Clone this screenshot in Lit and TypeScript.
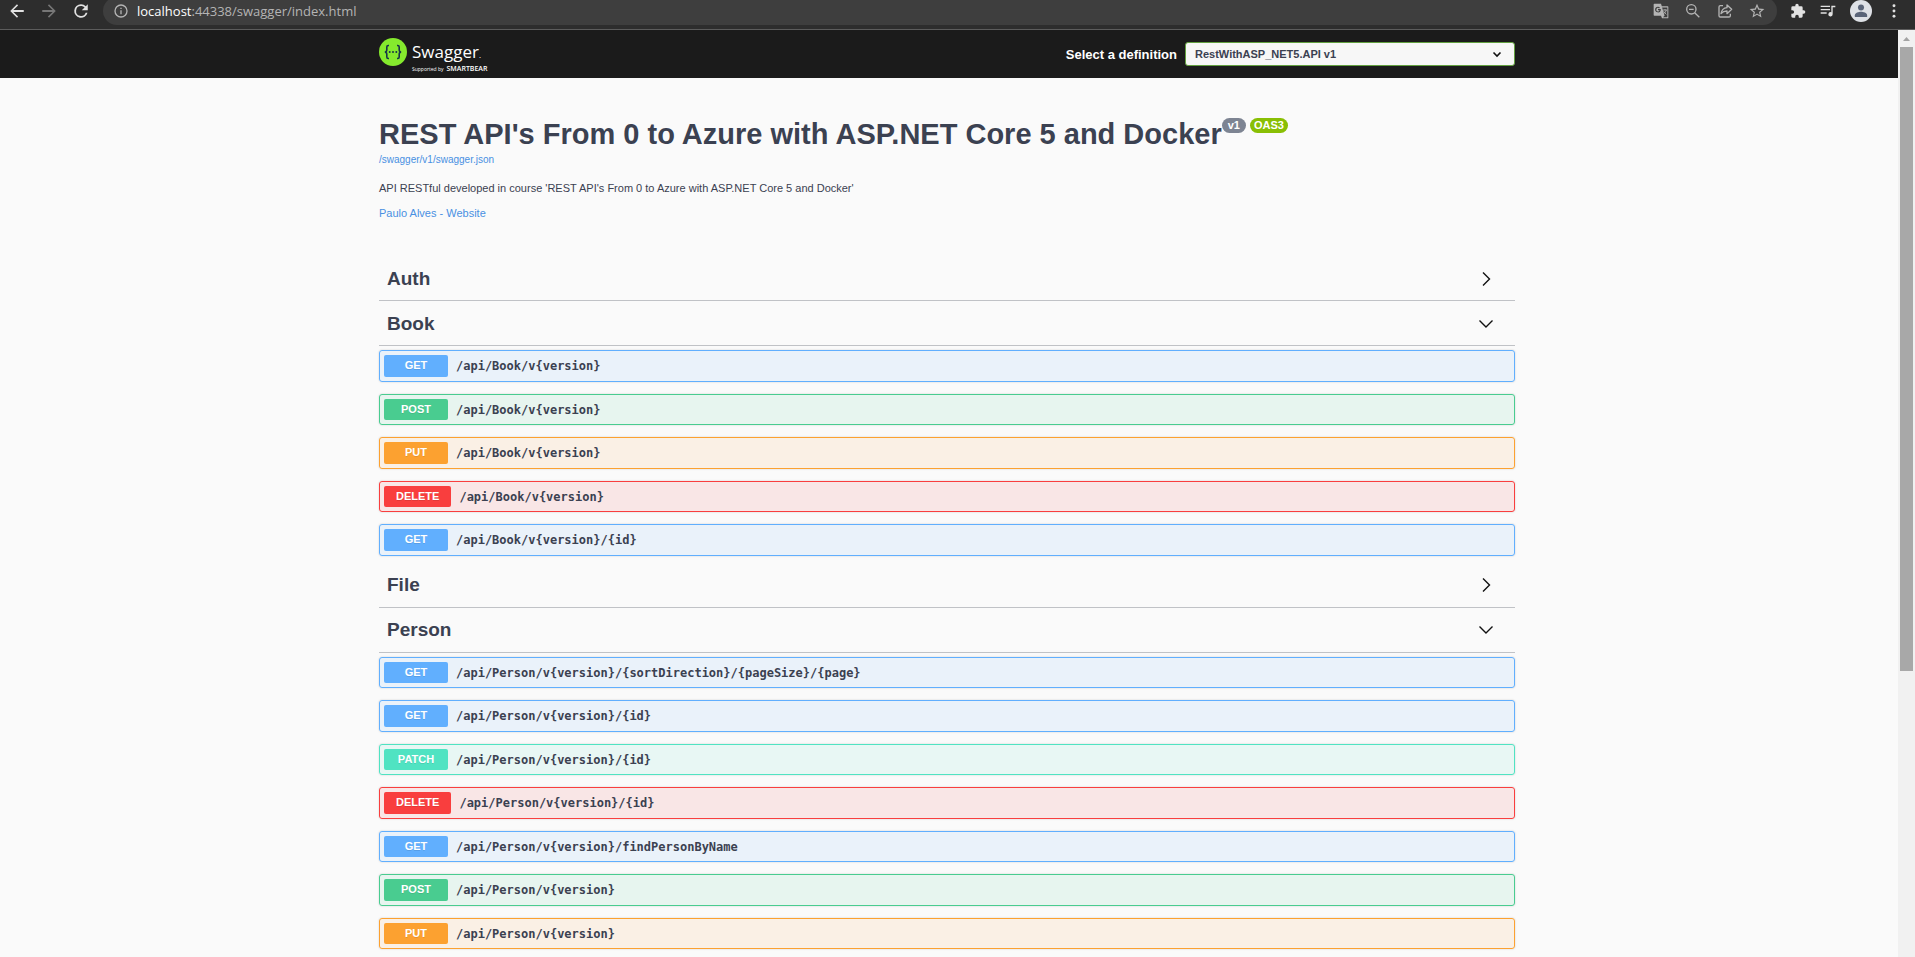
import { LitElement, html, css, svg } from "lit";
import { customElement, property, state } from "lit/decorators.js";

type Method = "get" | "post" | "put" | "delete" | "patch";

interface Operation {
  method: Method;
  path: string;
}

interface Tag {
  name: string;
  open: boolean;
  operations: Operation[];
}

const TAGS: Tag[] = [
  { name: "Auth", open: false, operations: [] },
  {
    name: "Book",
    open: true,
    operations: [
      { method: "get", path: "/api/Book/v{version}" },
      { method: "post", path: "/api/Book/v{version}" },
      { method: "put", path: "/api/Book/v{version}" },
      { method: "delete", path: "/api/Book/v{version}" },
      { method: "get", path: "/api/Book/v{version}/{id}" },
    ],
  },
  { name: "File", open: false, operations: [] },
  {
    name: "Person",
    open: true,
    operations: [
      { method: "get", path: "/api/Person/v{version}/{sortDirection}/{pageSize}/{page}" },
      { method: "get", path: "/api/Person/v{version}/{id}" },
      { method: "patch", path: "/api/Person/v{version}/{id}" },
      { method: "delete", path: "/api/Person/v{version}/{id}" },
      { method: "get", path: "/api/Person/v{version}/findPersonByName" },
      { method: "post", path: "/api/Person/v{version}" },
      { method: "put", path: "/api/Person/v{version}" },
    ],
  },
];

const ICONS = {
  back: svg`<path d="M21 10.800H7.200l6.200-6.200L12 3l-9 9 9 9 1.400-1.600-6.200-6.200H21z"/>`,
  forward: svg`<path d="M12 3l-1.400 1.600 6.200 6.200H3v2.400h13.800l-6.200 6.200L12 21l9-9z"/>`,
  reload: svg`<path d="M18.400 5.600A9 9 0 0 0 12 3a9 9 0 1 0 8.700 11.300h-2.500A6.600 6.600 0 1 1 12 5.400c1.800 0 3.500.8 4.700 1.900L13 11h8V3z"/>`,
  info: svg`<path d="M11 7h2v2h-2zm0 4h2v6h-2zm1-9a10 10 0 1 0 0 20 10 10 0 0 0 0-20zm0 18a8 8 0 1 1 0-16 8 8 0 0 1 0 16z"/>`,
  translate: svg`<path fill-rule="evenodd" d="M2 1h10l1.200 4H22a1 1 0 0 1 1 1v16a1 1 0 0 1-1 1h-8.500L12 19H2a1 1 0 0 1-1-1V2a1 1 0 0 1 1-1zM7.500 5.500a4.300 4.300 0 1 0 4.200 5.200V9H7.500v1.800h2.300a2.500 2.500 0 1 1-.7-2.700l1.300-1.300a4.300 4.300 0 0 0-2.900-1.300zM13.700 6.600L17.400 19l-2.600 2.500h6.700V6.600z"/><path fill="none" stroke="currentColor" stroke-width="1.300" d="M15 10.500h6M18 9v1.500M20 10.500c-.5 2.500-2 4-3.500 5.300M16 12.500c.8 1.500 2.500 3.200 4 4.500"/>`,
  zoomOut: svg`<g fill="none" stroke="currentColor" stroke-width="2"><circle cx="9.500" cy="9.500" r="7"/><path d="M14.500 14.500l7 7M6 9.500h7"/></g>`,
  share: svg`<path fill="none" stroke="currentColor" stroke-width="2" stroke-linejoin="round" d="M9 4H5a2 2 0 0 0-2 2v13a2 2 0 0 0 2 2h13a2 2 0 0 0 2-2v-3M15 3l7 6.500-7 6.500v-4c-4 0-6.500 1-9 4 .8-5 4-8.500 9-9z"/>`,
  star: svg`<path transform="translate(-1.200 -1.200) scale(1.100)" d="M22 9.240l-7.190-.62L12 2 9.190 8.630 2 9.240l5.460 4.730L5.820 21 12 17.270 18.180 21l-1.630-7.030zM12 15.400l-3.760 2.270 1-4.280-3.320-2.880 4.380-.38L12 6.100l1.710 4.040 4.380.38-3.320 2.880 1 4.280z"/>`,
  puzzle: svg`<path d="M20.500 11H19V7a2 2 0 0 0-2-2h-4V3.500a2.500 2.500 0 0 0-5 0V5H4a2 2 0 0 0-2 2v3.800h1.500a2.700 2.700 0 0 1 0 5.400H2V20c0 1.100.9 2 2 2h3.800v-1.500a2.700 2.700 0 0 1 5.400 0V22H17a2 2 0 0 0 2-2v-4h1.500a2.500 2.500 0 0 0 0-5z"/>`,
  queue: svg`<path d="M1 4h14v2H1zm0 5h14v2H1zm0 5h9v2H1zM17 4h6v2.500h-4V17a3.200 3.200 0 1 1-2-3z"/>`,
  dots: svg`<circle cx="12" cy="4" r="2.200"/><circle cx="12" cy="12" r="2.200"/><circle cx="12" cy="20" r="2.200"/>`,
  avatar: svg`<circle cx="12" cy="12" r="12" fill="#dee1e6"/><circle cx="12" cy="8.200" r="3.300" fill="#5a6478"/><path fill="#5a6478" d="M5.300 18.500v-2c0-2.500 4.400-3.700 6.700-3.700s6.700 1.200 6.700 3.700v2z"/>`,
};

@customElement("browser-bar")
class BrowserBar extends LitElement {
  static styles = css`
    :host {
      display: flex;
      box-sizing: border-box;
      height: 30px;
      flex: none;
      align-items: flex-start;
      overflow: hidden;
      background: #2d2d2d;
      border-bottom: 1px solid #5c5c5c;
      color: #e2e2e2;
      font-family: "Open Sans", "Noto Sans", sans-serif;
    }
    .group {
      display: flex;
      align-items: center;
      height: 22px;
    }
    .nav {
      gap: 14px;
      padding: 0 13px 0 8px;
    }
    .tools {
      gap: 14px;
      padding: 0 13px;
    }
    button {
      display: flex;
      padding: 0;
      border: 0;
      background: none;
      color: inherit;
    }
    .off {
      color: #777;
    }
    svg {
      display: block;
      fill: currentColor;
      width: 18px;
      height: 18px;
    }
    .large svg {
      width: 22px;
      height: 22px;
    }
    .small svg {
      width: 16px;
      height: 16px;
    }
    .address {
      display: flex;
      flex: 1;
      align-items: center;
      gap: 16px;
      height: 28px;
      box-sizing: border-box;
      margin-top: -3px;
      padding: 0 12px 0 10px;
      border-radius: 14px;
      background: #3e3e3e;
      color: #b4b4b4;
    }
    .url {
      flex: 1;
      margin-left: -8px;
      font-size: 13px;
      line-height: 20px;
    }
    .host {
      color: #fff;
    }
  `;

  private icon(name: keyof typeof ICONS, label: string, cls = "") {
    return html`<button class=${cls} aria-label=${label}>
      <svg viewBox="0 0 24 24" aria-hidden="true">${ICONS[name]}</svg>
    </button>`;
  }

  render() {
    return html`
      <div class="group nav">
        ${this.icon("back", "Back")} ${this.icon("forward", "Forward", "off")}
        ${this.icon("reload", "Reload")}
      </div>
      <div class="address">
        ${this.icon("info", "Site information", "small")}
        <span class="url"><span class="host">localhost</span>:44338/swagger/index.html</span>
        ${this.icon("translate", "Translate", "small")} ${this.icon("zoomOut", "Zoom", "small")}
        ${this.icon("share", "Share", "small")} ${this.icon("star", "Bookmark", "small")}
      </div>
      <div class="group tools">
        ${this.icon("puzzle", "Extensions", "small")} ${this.icon("queue", "Media", "small")}
        ${this.icon("avatar", "Profile", "large")} ${this.icon("dots", "Menu", "small")}
      </div>
    `;
  }
}

@customElement("swagger-topbar")
class SwaggerTopbar extends LitElement {
  static styles = css`
    :host {
      display: block;
      background: #1b1b1b;
      font-family: "Liberation Sans", Arial, sans-serif;
    }
    .inner {
      display: flex;
      align-items: center;
      justify-content: space-between;
      box-sizing: border-box;
      width: 100%;
      max-width: 1168px;
      height: 48px;
      margin: 0 auto;
      padding: 0 16px;
    }
    .logo {
      display: flex;
      align-items: flex-start;
      gap: 5px;
      color: #fff;
      text-decoration: none;
      font-family: "Open Sans", "Noto Sans", sans-serif;
    }
    .mark {
      width: 28px;
      height: 28px;
    }
    .words {
      display: flex;
      flex-direction: column;
      padding-top: 2px;
    }
    .name {
      font-size: 17px;
      line-height: 24px;
      font-weight: 400;
    }
    .name small {
      font-size: 8px;
    }
    .by {
      display: flex;
      align-items: center;
      gap: 3px;
      font-size: 5px;
      line-height: 4px;
    }
    .by strong {
      font-size: 7px;
      font-weight: 600;
    }
    .pick {
      display: flex;
      align-items: center;
      gap: 8px;
    }
    label {
      color: #fff;
      font-size: 13px;
      font-weight: 700;
    }
    .field {
      display: grid;
      width: 330px;
      align-items: center;
    }
    select {
      grid-area: 1 / 1;
      appearance: none;
      width: 100%;
      height: 24px;
      padding: 0 24px 0 9px;
      border: 1px solid #62a03f;
      border-radius: 3px;
      background: #f7f7f7;
      color: #3b4151;
      font: 700 11px "Liberation Sans", Arial, sans-serif;
    }
    .arrow {
      grid-area: 1 / 1;
      justify-self: end;
      width: 10px;
      height: 10px;
      margin-right: 13px;
      pointer-events: none;
    }
  `;

  render() {
    return html`
      <div class="inner">
        <a class="logo" href="#" aria-label="Swagger">
          <svg class="mark" viewBox="0 0 28 28" aria-hidden="true">
            <circle cx="14" cy="14" r="14" fill="#85ea2d" />
            <g fill="none" stroke="#173647" stroke-width="1.600">
              <path d="M10 7.500H9.300Q7.800 7.500 7.800 9v2.700Q7.800 14 5.800 14 7.800 14 7.800 16.300V19q0 1.500 1.500 1.500H10" />
              <path d="M18 7.500h.7q1.500 0 1.500 1.500v2.700q0 2.300 2 2.300-2 0-2 2.300V19q0 1.500-1.500 1.500H18" />
            </g>
            <g fill="#173647">
              <circle cx="10.700" cy="14" r="1" />
              <circle cx="14" cy="14" r="1" />
              <circle cx="17.300" cy="14" r="1" />
            </g>
          </svg>
          <span class="words">
            <span class="name">Swagger<small>.</small></span>
            <span class="by">Supported by <strong>SMARTBEAR</strong></span>
          </span>
        </a>
        <div class="pick">
          <label for="definition">Select a definition</label>
          <div class="field">
            <select id="definition">
              <option>RestWithASP_NET5.API v1</option>
            </select>
            <svg class="arrow" viewBox="0 0 10 10" aria-hidden="true">
              <path d="M1.500 3.500L5 7l3.500-3.500" fill="none" stroke="#111" stroke-width="1.600" />
            </svg>
          </div>
        </div>
      </div>
    `;
  }
}

@customElement("api-tag")
class ApiTag extends LitElement {
  static styles = css`
    :host {
      display: block;
      color: #3b4151;
      font-family: "Liberation Sans", Arial, sans-serif;
    }
    h3 {
      margin: 0;
    }
    .head {
      display: flex;
      align-items: center;
      justify-content: space-between;
      box-sizing: border-box;
      width: 100%;
      height: 45px;
      padding: 1px 21px 0 8px;
      border: 0;
      border-bottom: 1px solid rgba(59, 65, 81, 0.3);
      background: none;
      color: inherit;
      font: 700 19px "Liberation Sans", Arial, sans-serif;
    }
    .chevron {
      width: 16px;
      height: 16px;
    }
    .list {
      display: flex;
      flex-direction: column;
      gap: 12px;
      padding: 4px 0 7px;
    }
    .op {
      --tone: #61affe;
      display: flex;
      align-items: center;
      gap: 8px;
      box-sizing: border-box;
      width: 100%;
      padding: 4px;
      border: 1px solid var(--tone);
      border-radius: 3px;
      background: color-mix(in srgb, var(--tone) 10%, transparent);
      box-shadow: 0 0 2px rgba(0, 0, 0, 0.19);
      color: inherit;
      text-align: left;
    }
    .post {
      --tone: #49cc90;
    }
    .put {
      --tone: #fca130;
    }
    .delete {
      --tone: #f93e3e;
    }
    .patch {
      --tone: #50e3c2;
    }
    .method {
      box-sizing: border-box;
      min-width: 64px;
      padding: 2px 12px 3px;
      border-radius: 2px;
      background: var(--tone);
      color: #fff;
      font-family: "Liberation Sans", Arial, sans-serif;
      font-size: 11px;
      font-weight: 700;
      line-height: 1.5;
      text-align: center;
      text-shadow: 0 1px 0 rgba(0, 0, 0, 0.1);
      text-transform: uppercase;
    }
    .path {
      padding-top: 1px;
      font-family: "DejaVu Sans Mono", "Liberation Mono", monospace;
      font-size: 12px;
      font-weight: 700;
      line-height: 16px;
    }
  `;

  @property({ attribute: false }) tag!: Tag;
  @state() private open?: boolean;

  render() {
    const open = this.open ?? this.tag.open;
    return html`
      <h3>
        <button class="head" aria-expanded=${open} @click=${() => (this.open = !open)}>
          ${this.tag.name}
          <svg class="chevron" viewBox="0 0 16 16" aria-hidden="true">
            <path
              d=${open ? "M1.500 4.500L8 11l6.500-6.500" : "M5 1.500L11.500 8 5 14.500"}
              fill="none"
              stroke="#111"
              stroke-width="1.400"
            />
          </svg>
        </button>
      </h3>
      ${open
        ? html`<div class="list">
            ${this.tag.operations.map(
              (op) => html`<button class="op ${op.method}">
                <span class="method">${op.method}</span>
                <span class="path">${op.path}</span>
              </button>`
            )}
          </div>`
        : null}
    `;
  }
}

@customElement("app-root")
class AppRoot extends LitElement {
  static styles = css`
    :host {
      display: flex;
      flex-direction: column;
      height: 100vh;
      overflow: hidden;
      background: #fafafa;
      color: #3b4151;
      font-family: "Liberation Sans", Arial, sans-serif;
    }
    .view {
      display: flex;
      flex: 1;
      min-height: 0;
    }
    .page {
      flex: 1;
      min-width: 0;
      overflow: hidden;
    }
    swagger-topbar {
      padding-right: 4px;
    }
    main {
      box-sizing: border-box;
      max-width: 1172px;
      margin: 0 auto;
      padding: 0 20px 0 16px;
    }
    .info {
      padding: 40px 0 35px;
    }
    .title {
      display: flex;
      align-items: flex-start;
    }
    .badges {
      display: flex;
      gap: 4px;
    }
    h1 {
      margin: 0;
      font-size: 29px;
      line-height: 32px;
    }
    .badge {
      padding: 0 6px;
      border-radius: 8px;
      background: #7d8492;
      color: #fff;
      font-size: 11px;
      font-weight: 700;
      line-height: 15px;
    }
    .oas {
      padding: 0 4px;
      background: #89bf04;
    }
    a {
      color: #4990e2;
      text-decoration: none;
    }
    .spec {
      display: block;
      padding-top: 4px;
      font-size: 10px;
      line-height: 12px;
    }
    p {
      margin: 0;
      padding-top: 14px;
      font-size: 11px;
      line-height: 16px;
    }
    .contact {
      padding-top: 9px;
    }
    .scroll {
      display: flex;
      flex-direction: column;
      flex: none;
      width: 17px;
      background: #f1f1f1;
    }
    .up {
      display: block;
      width: 17px;
      height: 17px;
    }
    .thumb {
      flex: 624;
      margin: 0 2px;
      background: #a8a8a8;
    }
    .rest {
      flex: 286;
    }
  `;

  render() {
    return html`
      <browser-bar></browser-bar>
      <div class="view">
        <div class="page">
          <swagger-topbar></swagger-topbar>
          <main>
            <section class="info">
              <div class="title">
                <h1>REST API's From 0 to Azure with ASP.NET Core 5 and Docker</h1>
                <div class="badges">
                  <span class="badge">v1</span>
                  <span class="badge oas">OAS3</span>
                </div>
              </div>
              <a class="spec" href="#">/swagger/v1/swagger.json</a>
              <p>
                API RESTful developed in course 'REST API's From 0 to Azure with ASP.NET Core 5 and
                Docker'
              </p>
              <p class="contact"><a href="#">Paulo Alves - Website</a></p>
            </section>
            ${TAGS.map((tag) => html`<api-tag .tag=${tag}></api-tag>`)}
          </main>
        </div>
        <div class="scroll" aria-hidden="true">
          <svg class="up" viewBox="0 0 17 17"><path d="M5 11l3.500-4 3.500 4z" fill="#a3a3a3" /></svg>
          <div class="thumb"></div>
          <div class="rest"></div>
        </div>
      </div>
    `;
  }
}
